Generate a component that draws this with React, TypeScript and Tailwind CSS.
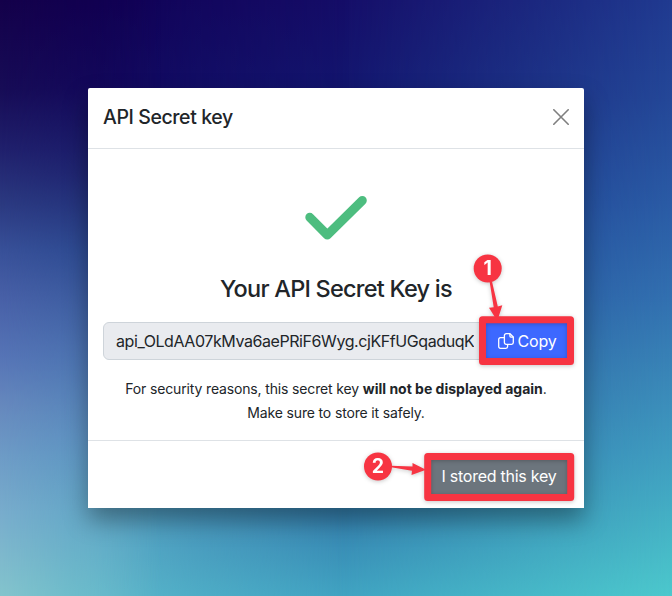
import React from "react";

function Backdrop() {
  return (
    <div className="absolute inset-0 bg-[linear-gradient(to_bottom,#150d68_0%,#13166f_15%,#1c3c90_40%,#2a5f9f_65%,#3582b0_87%,#40a3c2_100%)]">
      <div className="absolute inset-0 bg-[linear-gradient(to_bottom,#203a90_0%,#244898_17%,#2a5ba5_34%,#3270b0_50%,#3a88b8_64%,#3f9cc0_76%,#45b2c5_88%,#4cc8cc_100%)] [mask-image:linear-gradient(to_right,transparent_50%,black_100%)]" />
      <div className="absolute inset-0 bg-[linear-gradient(to_bottom,#100054_0%,#11065c_14%,#1c2270_29%,#28488f_42%,#4470ac_58%,#548fc0_73%,#58a4c4_85%,#5cb6ca_100%)] [mask-image:linear-gradient(to_right,black_14%,rgba(0,0,0,0.5)_30%,transparent_52%)]" />
      <div className="absolute inset-0 bg-[linear-gradient(to_bottom,#14004a_0%,#170c56_15%,#20206c_25%,#2b3980_34%,#385098_42%,#4860a7_50%,#5674b6_60%,#6688bd_68%,#6e9cc6_77%,#78accc_86%,#84c4cc_100%)] [mask-image:linear-gradient(to_right,black_0%,rgba(0,0,0,0.45)_11%,transparent_24%)]" />
    </div>
  );
}

function CopyIcon() {
  return (
    <svg width="16" height="16" viewBox="0 0 16 16" fill="none" stroke="currentColor" strokeWidth="1.3" strokeLinejoin="round">
      <path d="M8.1.7h3.9l3.3 3.3v5.6a1.7 1.7 0 0 1-1.7 1.7H8.1a1.7 1.7 0 0 1-1.7-1.7V2.4A1.7 1.7 0 0 1 8.1.7Z" />
      <path d="M11.9.7v2.4a1 1 0 0 0 1 1h2.4" />
      <path d="M6.4 4.7H2.4A1.7 1.7 0 0 0 .7 6.4v7.2a1.7 1.7 0 0 0 1.7 1.7h5.5a1.7 1.7 0 0 0 1.7-1.7v-2.3" />
    </svg>
  );
}

function Callouts() {
  return (
    <svg className="pointer-events-none absolute inset-0 drop-shadow-[0_1px_2px_rgba(0,0,0,0.22)]" width="672" height="596" viewBox="0 0 672 596">
      <g fill="#f73442">
        <circle cx="487.7" cy="268.5" r="14" />
        <path d="M489.6 281.5 L492 281.5 L497.8 306.5 L502.3 305.2 L497.3 321 L489 307.8 L493.7 307.3 Z" />
        <circle cx="378" cy="466.5" r="14" />
        <path d="M391 465.8 L412.5 466.6 L412.5 463 L426 469.8 L411.5 475 L412 470.8 L391 467.2 Z" />
      </g>
      <g fill="none" stroke="#f73442" strokeWidth="7" strokeLinejoin="round">
        <rect x="482.5" y="319.8" width="88" height="41.8" />
        <rect x="427.7" y="456.5" width="143" height="41" />
      </g>
      <g fill="white" fontFamily="Inter, sans-serif" fontWeight="700" fontSize="19.5" textAnchor="middle">
        <text x="487.8" y="275.3">1</text>
        <text x="378" y="473.3">2</text>
      </g>
    </svg>
  );
}

export default function App() {
  return (
    <div className="relative h-[596px] w-[672px] overflow-hidden p-[88px] font-['Inter',sans-serif] text-[#212529]">
      <Backdrop />
      <div className="relative flex h-[420px] w-[496px] flex-col rounded-t-[2px] bg-white shadow-[0_12px_24px_rgba(0,0,0,0.36)]">
        <header className="flex h-[61px] items-center justify-between border-b border-[#dee2e6] px-[15px]">
          <h5 className="text-[19.5px] font-medium tracking-[-0.4px]">API Secret key</h5>
          <svg className="mb-[2px]" width="16" height="16" viewBox="0 0 16 16" stroke="#7f7f7f" strokeWidth="1.6" strokeLinecap="round">
            <path d="M.8.8l14.4 14.4M15.2.8L.8 15.2" />
          </svg>
        </header>
        <main className="flex h-[291px] flex-col items-center px-[15px]">
          <svg className="mt-[46px]" width="64" height="46" viewBox="0 0 64 46" fill="none" stroke="#4dbd7f" strokeWidth="9" strokeLinecap="round" strokeLinejoin="round">
            <path d="M5.8 22.3L23.3 40L58.3 5.5" />
          </svg>
          <h4 className="mt-[32px] text-[23.5px] leading-8 font-medium tracking-[-0.76px] whitespace-nowrap">Your API Secret Key is</h4>
          <div className="mt-[17px] flex h-[38px] w-full">
            <div className="flex min-w-0 flex-1 items-center rounded-l-md border border-[#ced4da] bg-[#e9ebef] pr-2 pl-3">
              <span className="w-[358px] overflow-hidden text-[16px] tracking-[-0.42px] whitespace-nowrap">api_OLdAA07kMva6aePRiF6Wyg.cjKFfUGqaduqK</span>
            </div>
            <button className="flex w-[84px] items-center justify-center gap-1 rounded-r bg-[#3d68ff] text-[16px] tracking-[-0.2px] text-white">
              <CopyIcon />
              Copy
            </button>
          </div>
          <p className="mt-[17px] text-center text-[14px] leading-6 tracking-[-0.15px] whitespace-nowrap">
            For security reasons, this secret key <b className="tracking-normal">will not be displayed again</b>.<br />
            Make sure to store it safely.
          </p>
        </main>
        <footer className="flex h-[68px] items-center justify-end border-t border-[#dee2e6] px-3">
          <button className="h-[40px] w-[142px] rounded-sm bg-[#6c757d] pt-[3px] pr-[4px] text-[16px] tracking-[-0.25px] text-white">I stored this key</button>
        </footer>
      </div>
      <Callouts />
    </div>
  );
}
